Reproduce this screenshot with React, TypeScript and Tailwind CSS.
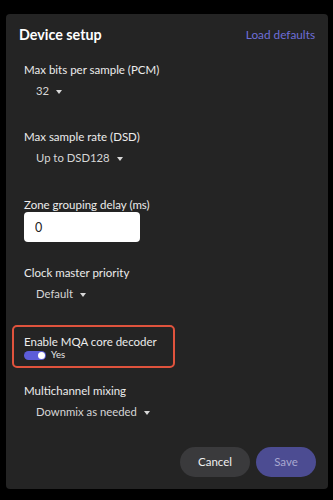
import React, { useState } from 'react';

interface DropdownFieldProps {
  label: string;
  value: string;
  className?: string;
}

const Caret = () => (
  <svg width="6" height="4" viewBox="0 0 6 4" className="ml-[7px] mt-[1px]">
    <path d="M0 0 L6 0 L3 4 Z" fill="#d8d8d8" />
  </svg>
);

const DropdownField = ({ label, value, className }: DropdownFieldProps) => (
  <div className={className}>
    <div className="text-[11.5px] leading-[18px] text-[#ececec]">{label}</div>
    <div className="mt-[2px] flex h-[20px] items-center pl-[12px] text-[11.3px] text-[#d6d6d6]">
      <span>{value}</span>
      <Caret />
    </div>
  </div>
);

const App = () => {
  const [mqa, setMqa] = useState(true);
  const [delay, setDelay] = useState('0');

  return (
    <div
      className="h-[500px] w-[333px] bg-black pl-[6px] pt-[14px]"
      style={{ fontFamily: 'Lato, "Noto Sans", sans-serif' }}
    >
      <div className="flex h-[475px] w-[322px] flex-col rounded-[4px] bg-[#242424] pt-[11px]">
        <div className="flex h-[20px] items-center justify-between pl-[13px] pr-[13px]">
          <h1 className="text-[14.3px] font-bold text-white">Device setup</h1>
          <button className="text-[11.8px] text-[#6e6ed8]">Load defaults</button>
        </div>

        <div className="flex flex-col pl-[18px]">
          <DropdownField className="mt-[16px]" label="Max bits per sample (PCM)" value="32" />
          <DropdownField className="mt-[27px]" label="Max sample rate (DSD)" value="Up to DSD128" />

          <div className="mt-[29px]">
            <div className="text-[11.5px] leading-[16px] text-[#ececec]">Zone grouping delay (ms)</div>
            <input
              value={delay}
              onChange={(e) => setDelay(e.target.value)}
              className="mt-[-1px] h-[30px] w-[116px] rounded-[4px] bg-white pl-[11px] text-[12.5px] text-[#222] outline-none"
            />
          </div>

          <DropdownField className="mt-[22px]" label="Clock master priority" value="Default" />

          <div className="-ml-[12px] mt-[21px] h-[43px] w-[163px] rounded-[5px] border-2 border-[#e0533d] pl-[10px] pt-[6px]">
            <div className="whitespace-nowrap text-[11.5px] leading-[17px] text-[#ececec]">Enable MQA core decoder</div>
            <div className="flex h-[11px] items-center">
              <button
                onClick={() => setMqa(!mqa)}
                className="flex h-[9px] w-[22px] items-center justify-end rounded-full bg-[#5c5cd8] pr-[1px]"
              >
                <span className="block h-[7px] w-[7px] rounded-full bg-white" />
              </button>
              <span className="ml-[5px] text-[9.5px] text-[#e6e6e6]">{mqa ? 'Yes' : 'No'}</span>
            </div>
          </div>

          <DropdownField className="mt-[14px]" label="Multichannel mixing" value="Downmix as needed" />
        </div>

        <div className="mt-auto flex justify-end gap-[6px] pb-[12px] pr-[12px]">
          <button className="h-[30px] w-[70px] rounded-full bg-[#3a3a3c] text-[11.5px] text-[#f0f0f0]">
            Cancel
          </button>
          <button className="h-[30px] w-[60px] rounded-full bg-[#4c4c92] text-[11.5px] text-[#a8a8d0]">
            Save
          </button>
        </div>
      </div>
    </div>
  );
};

export default App;
